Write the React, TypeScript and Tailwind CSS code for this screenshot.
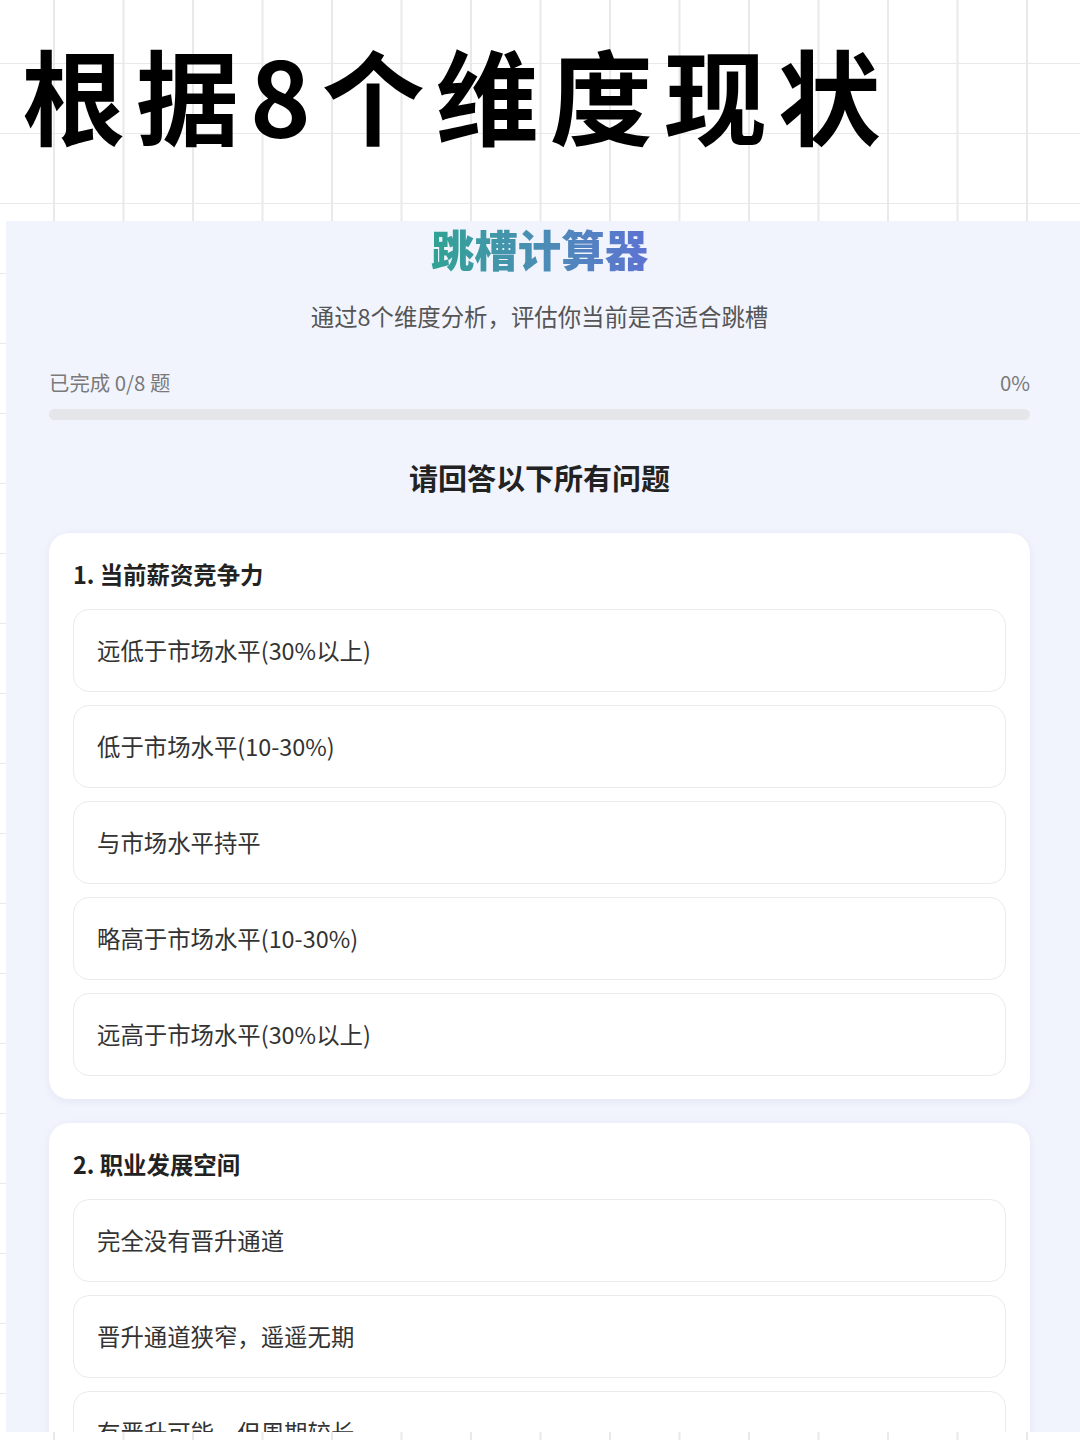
import React from "react";

type Question = { title: string; options: string[] };

const questions: Question[] = [
  {
    title: "1. 当前薪资竞争力",
    options: [
      "远低于市场水平(30%以上)",
      "低于市场水平(10-30%)",
      "与市场水平持平",
      "略高于市场水平(10-30%)",
      "远高于市场水平(30%以上)",
    ],
  },
  {
    title: "2. 职业发展空间",
    options: [
      "完全没有晋升通道",
      "晋升通道狭窄，遥遥无期",
      "有晋升可能，但周期较长",
      "晋升通道清晰，机会较多",
      "发展空间很大，成长迅速",
    ],
  },
];

const cjk = { fontFamily: '"Noto Sans CJK SC", "Noto Sans", sans-serif' };

function QuestionCard({ q }: { q: Question }) {
  return (
    <div className="rounded-[20px] bg-white px-[24px] pt-[24px] pb-[23px] shadow-[0_2px_10px_rgba(30,40,90,0.06)]">
      <h3 className="text-[23.4px] font-bold leading-[34px] text-[#222]">{q.title}</h3>
      <div className="mt-[18px] flex flex-col gap-[13px]">
        {q.options.map((o) => (
          <div
            key={o}
            className="flex h-[83px] items-center rounded-[16px] border border-[#ebebeb] bg-white pl-[23px] text-[23.4px] text-[#333]"
          >
            {o}
          </div>
        ))}
      </div>
    </div>
  );
}

export default function App() {
  return (
    <div
      className="h-[1440px] w-[1080px] overflow-hidden bg-white bg-[linear-gradient(to_right,#e9e9e9_1.5px,transparent_1.5px),linear-gradient(to_bottom,#e9e9e9_1.5px,transparent_1.5px)] bg-[size:69.5px_70px] bg-[position:53px_63px]"
      style={cjk}
    >
      {/* poster headline */}
      <div className="h-[221px] pt-[34px] pl-[22px]">
        <h1 className="text-[103px] font-bold leading-[120px] tracking-[11px] text-black">根据8个维度现状</h1>
      </div>

      {/* calculator panel */}
      <div className="ml-[6px] h-[1211px] w-[1074px] overflow-hidden bg-[#f1f4fd] pt-[2px]">
        <div className="ml-[43px] w-[981px]">
          <div className="flex justify-center">
            <h2 className="bg-gradient-to-r from-[#2fa394] to-[#5d72d2] bg-clip-text text-[43.5px] font-black leading-[52px] text-transparent">
              跳槽计算器
            </h2>
          </div>
          <p className="mt-[24px] text-center text-[23.4px] leading-[34px] text-[#555]">
            通过8个维度分析，评估你当前是否适合跳槽
          </p>

          <div className="mt-[35px] flex items-center justify-between text-[20.4px] leading-[28px] text-[#7a7a7a]">
            <span>已完成 0/8 题</span>
            <span>0%</span>
          </div>
          <div className="mt-[13px] h-[11px] w-full rounded-full bg-[#e4e6ea]">
            <div className="h-full rounded-full bg-[#5f6fd4]" style={{ width: "0%" }} />
          </div>

          <h2 className="mt-[37px] text-center text-[29px] font-bold leading-[40px] text-[#222]">请回答以下所有问题</h2>

          <div className="mt-[36px] flex flex-col gap-[24px]">
            {questions.map((q) => (
              <QuestionCard key={q.title} q={q} />
            ))}
          </div>
        </div>
      </div>
    </div>
  );
}
